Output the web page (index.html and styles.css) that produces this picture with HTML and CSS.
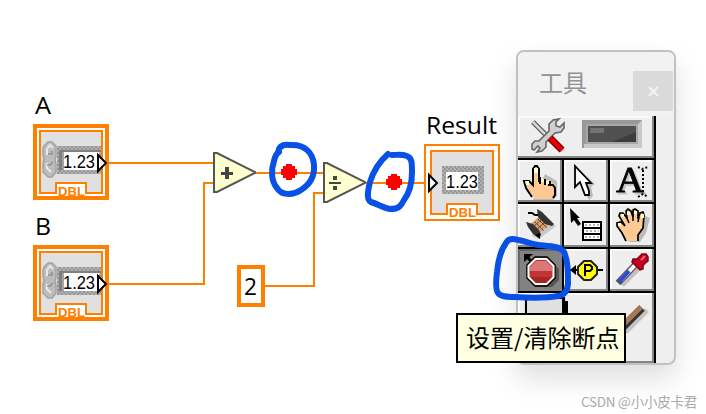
FILE: index.html
```html
<!DOCTYPE html>
<html lang="zh-CN">
<head>
<meta charset="utf-8">
<title>工具</title>
<link rel="stylesheet" href="styles.css">
</head>
<body>
<main class="canvas">
<svg class="diagram" width="706" height="414" viewBox="0 0 706 414">
  <defs>
    <pattern id="dither" width="4" height="4" patternUnits="userSpaceOnUse"><path fill="#b0b0b0" d="M0 0h4v4H0z"/><path fill="#979797" d="M0 0h2v2H0zM2 2h2v2H2z"/></pattern>
    <g id="control">
      <path fill="#fff" stroke="#ff8000" stroke-width="4" d="M2 2h72v72H2z"/>
      <path fill="#e0e0e0" stroke="#ff8000" stroke-width="2" d="M7 7h62v62H7z"/>
      <path fill="url(#dither)" d="M24 22h44v28H24z"/>
      <path fill="#808080" d="M26 26h3v20h-3zM29 26h39v2H29z"/>
      <path fill="#fff" d="M31 28h35v18H31z"/>
      <path fill="#bcbcbc" stroke="#a2a2a2" stroke-width="1.5" d="M11 22l4-4h4l4 4v10l-1 4 1 4v8l-4 5h-4l-5-5v-9l1-4-1-4v-6z"/>
      <path fill="none" stroke="#e8e8e8" stroke-width="2" d="M14 31v-6l3-4 3 3M14 39v5l4 4"/>
      <path fill="none" stroke="#909090" stroke-width="1.5" d="M15 30h4v-3M14 41h3l3-3"/>
      <text class="digits" x="30" y="44" textLength="32" lengthAdjust="spacingAndGlyphs">1.23</text>
      <path fill="#fff" stroke="#000" stroke-width="2" d="M65 31v16l8-8z"/>
      <path fill="#fff" stroke="#ff8000" stroke-width="2" d="M23 70V59h30v11"/>
      <path fill="#fff" d="M24 67h28v5H24z"/>
      <text class="dbl" x="25" y="71.5" textLength="27" lengthAdjust="spacingAndGlyphs">DBL</text>
    </g>
    <g id="gate">
      <path fill="#ffffd0" stroke="#555" stroke-width="2" d="M1 1h3l38 19v1L4 40H1z"/>
    </g>
    <path id="dot" fill="#f00" d="M-3-8h6v2h3v3h2v6H6v3H3v2h-6V6h-3V3h-2v-6h2v-3h3z"/>
  </defs>
  <path class="wire" d="M109 163h106M109 284h95V183h11M255 173h69M265 286h49v-93h11M366 183h63"/>
  <text class="label" x="35" y="114" textLength="16" lengthAdjust="spacingAndGlyphs">A</text>
  <text class="label" x="35" y="235" textLength="16" lengthAdjust="spacingAndGlyphs">B</text>
  <text class="label" x="426" y="134" textLength="71" lengthAdjust="spacingAndGlyphs">Result</text>
  <use href="#control" x="33" y="124"/>
  <use href="#control" x="33" y="245"/>
  <g transform="translate(424 144)">
    <path fill="#fff" stroke="#ff8000" stroke-width="2" d="M1 1h74v75H1z"/>
    <path fill="#e0e0e0" stroke="#ff8000" stroke-width="2" d="M7 7h62v63H7z"/>
    <path fill="url(#dither)" d="M18 22h42v28H18z"/>
    <path fill="#fff" d="M22 28h32v18H22z"/>
    <text class="digits" x="22" y="44" textLength="32" lengthAdjust="spacingAndGlyphs">1.23</text>
    <path fill="#fff" stroke="#000" stroke-width="2" d="M5 31v16l8-8z"/>
    <path fill="#fff" stroke="#ff8000" stroke-width="2" d="M23 71V60h30v11"/>
    <path fill="#fff" d="M24 68h28v5H24z"/>
    <text class="dbl" x="25" y="72.5" textLength="27" lengthAdjust="spacingAndGlyphs">DBL</text>
  </g>
  <use href="#gate" x="213" y="152"/>
  <path fill="#444" d="M221 172h12v3h-12zM225 167h4v12h-4z"/>
  <use href="#gate" x="323" y="162"/>
  <path fill="#444" d="M329 182h12v2h-12zM333 176h4v4h-4zM333 186h4v4h-4z"/>
  <path fill="#fff" stroke="#ff8000" stroke-width="4" d="M239 267h24v38h-24z"/>
  <text class="label" x="244" y="295" textLength="13" lengthAdjust="spacingAndGlyphs">2</text>
  <use href="#dot" x="289" y="172"/>
  <use href="#dot" x="394" y="182"/>
</svg>

<section class="palette">
  <header class="titlebar">
    <h1 class="title">工具</h1>
    <svg class="close" width="40" height="40" viewBox="633 71 40 40"><path fill="none" stroke="#f4f4f4" stroke-width="2" d="M649 87l9 9M658 87l-9 9"/></svg>
  </header>
  <div class="tools">
    <svg class="cell wide" viewBox="518 116 136 42">
      <path fill="none" stroke="#ccc" stroke-width="5" d="M541 130l22 21"/>
      <path fill="none" stroke="#555" stroke-width="5" d="M533 122l16 16"/><path fill="none" stroke="#d8d8d8" stroke-width="2.5" d="M533 122l17 17"/>
      <path fill="#d0d0d0" stroke="#666" stroke-width="1.6" d="M553 120l-4 4v7l-10 10h-4l-3 3v5l2 1 4-4 2 2-3 4 5-1 4-4v-5l9-9 6-1 3-4v-5l-4 4-4-1v-4l3-3z"/>
      <path fill="none" stroke="#700" stroke-width="7" d="M550 138l12 12"/><path fill="none" stroke="#e00" stroke-width="4" d="M550 138l12 12"/>
      <path fill="#989898" d="M582 120h60v28h-60z"/><path fill="#c8c8c8" d="M584 144h54v-20l4-4v28h-58z"/><path fill="#a8a8a8" d="M586 124h52v20h-52z"/>
      <path fill="#505050" d="M588 126h48v16h-48z"/><path fill="#747474" d="M590 128h14v5h-14z"/><path fill="#3d3d3d" d="M612 142l24-10v10z"/>
    </svg>
    <svg class="cell" viewBox="518 160 44 42">
      <path fill="#bbb" d="M545 174l12 7v15l-4 4h-20z"/>
      <path fill="#ffc994" d="M534 167h4v14l3-2h4l2 1h3l2 3 3 1v8l-2 7h-18l-6-8-4-7 2-2 5 3 2 2z"/>
      <path fill="none" stroke="#000" stroke-width="2" d="M532 197l-6-9-2-7h5l4 4v-16l2-3h2l2 3v12h6v2h4v2h4l2 3v7l-2 3"/>
      <path stroke="#000" stroke-width="2" d="M540 177v7M545 179v6M550 181v5"/><path fill="#ffffd0" d="M534 168h4v5h-4zM525 181h4v4h-3zM541 179h3v3h-3zM546 181h3v3h-3z"/>
    </svg>
    <svg class="cell" viewBox="564 160 44 42">
      <path fill="#bbb" d="M579 169l16 15-4 3 2 9-4 4-5-9z"/><path fill="#fff" stroke="#000" stroke-width="1.8" d="M575 166v21l5-5 5 13h4v-4l-3-8h5z"/>
    </svg>
    <svg class="cell" viewBox="610 160 44 42">
      <text class="serif-a" x="616" y="192" textLength="28" lengthAdjust="spacingAndGlyphs">A</text>
      <path fill="none" stroke="#000" stroke-width="2" stroke-dasharray="2 2" d="M638 167l4 2 6-2M643 170v24M638 197l5-3 5 3"/>
    </svg>
    <svg class="cell" viewBox="518 204 44 43">
      <path fill="#c8c8c8" d="M544 217l12 9-17 13-7-3z"/>
      <path fill="none" stroke="#000" stroke-width="2" d="M528 213h4l3 2h3"/>
      <path fill="#d79e6e" d="M541 215l9 9-13 11-9-9z"/>
      <path stroke="#3a2920" stroke-width="1" stroke-dasharray="2 1" d="M538 219l9 9M535 222l9 9M532 225l9 9M543 218l-12 11M546 221l-12 11"/>
      <path fill="#333" d="M537 209l5 3 7 7 5 5-2 2-7-2-7-7zM526 222l7 2 6 6 2 5-2 3-6-4-5-7z"/>
      <path d="M535 235l5-2v6z"/>
    </svg>
    <svg class="cell" viewBox="564 204 44 43">
      <path d="M570 208l10 10h-3l4 6-3 2-4-6-3 3z"/><path fill="#fff" stroke="#000" stroke-width="2" d="M583 222h18v18h-18zM583 228h18M583 234h18"/><path stroke="#999" stroke-width="1.5" stroke-dasharray="2 2" d="M585 225h14M586 231h13M585 237h14"/>
    </svg>
    <svg class="cell" viewBox="610 204 44 43">
      <path fill="#bbb" d="M645 216l5 2-4 15-6 9h-11z"/>
      <path fill="#ffc994" d="M626 241l-4-8-5-7v-3l4-1 4 4-6-10 1-3h3l4 5-1-7 2-2 3 2 2 6v-7l2-1 3 2v8l2-6 3-1 1 3-1 13-5 7v6z"/>
      <path fill="none" stroke="#000" stroke-width="1.7" d="M626 241l-4-8-5-7v-3l4-1 4 4-6-10 1-3h3l4 5-1-7 2-2 3 2 2 6v-7l2-1 3 2v8l2-6 3-1 1 3-1 13-5 7v6"/>
      <path stroke="#000" stroke-width="1.5" d="M626 216l3 7M633 214v7M639 217l-1 5"/><path fill="#ffffd0" d="M621 214h3v3h-3zM627 212h3v3h-3zM634 211h3v3h-3zM641 214h3v4h-3zM618 223h3v3h-3z"/>
    </svg>
    <svg class="cell pressed" viewBox="518 249 44 42">
      <path fill="#555" d="M537 261h14l8 8v11l-7 7h-14z"/><path stroke="#000" stroke-width="3" d="M526 256l6 6"/><path d="M524 254h9l-9 8z"/>
      <path fill="#c33c3c" stroke="#000" stroke-width="1.5" d="M535 257h12l8 8v13l-8 8h-12l-8-8v-13z"/><path fill="#c23434" stroke="#fff" stroke-width="2" d="M535.5 259h11l7 7v11l-7 7h-11l-7-7v-11z"/><path fill="#dc7777" d="M536 261h10l6 6v4h-22v-4z"/><path fill="#a62525" d="M530 277h22l-6 6h-10z"/>
    </svg>
    <svg class="cell" viewBox="564 249 44 42">
      <path stroke="#000" stroke-width="2" d="M570 270h33"/><path d="M570 270l6-5v10z"/><path fill="#ff0" stroke="#222" stroke-width="2" d="M584 261h7l6 6v7l-6 6h-7l-6-6v-7z"/><path fill="none" stroke="#000" stroke-width="2" d="M585 276v-11h5l2 2v2l-2 2h-5"/>
    </svg>
    <svg class="cell" viewBox="610 249 44 42">
      <path fill="none" stroke="#c0c0c0" stroke-width="5" d="M622 285l22-22"/><path fill="none" stroke="#555" stroke-width="6.5" d="M618 283l19-20"/><path fill="none" stroke="#fff" stroke-width="4" d="M621 280l17-18"/><path fill="none" stroke="#3048df" stroke-width="4" d="M619 282l10-11"/>
      <path fill="#c40020" stroke="#800018" stroke-width="1.5" d="M642 254h4l2 3v4l-5 4v4l-3 1-8-8 1-3h4z"/><path stroke="#f66" stroke-width="2" d="M641 260l4-4"/>
    </svg>
    <svg class="cell bottom" viewBox="518 293 136 70">
      <path fill="#e0e0e0" d="M524 297h42v66h-42z"/><path fill="none" stroke="#000" stroke-width="2" d="M526 363v-65h38"/><path d="M562 297h3v4h3v14h-6z"/>
      <path stroke="#c4c4c4" stroke-width="6" d="M647 310l-22 22"/><path stroke="#333" stroke-width="8" d="M642 308l-20 20"/><path stroke="#a97850" stroke-width="5" d="M641 307l-20 20"/>
    </svg>
  </div>
</section>

<svg class="marks" width="706" height="414" viewBox="0 0 706 414">
  <path d="M278 152c1-6 5-8 12-7c15-1 23 8 24 20c1 13-5 20-13 25c-9 6-20 5-24-2c-6-7-6-18-3-27c1-5 2-7 5-9"/>
  <path d="M388 154c-9 8-15 18-18 28c-3 12-3 18 1 20c7 2 12 6 19 7c9 0 11-3 14-9c6-8 8-18 8-28c0-9 0-14-5-16c-5-2-10-1-15-1"/>
  <path d="M518 240c-6-2-10-1-12 3c-5 7-8 19-9 29c-1 8-2 17 1 21c3 4 10 4 17 4c16 1 32 1 43-1c7-1 9-5 10-12c0-12 0-23-4-32c-3-6-15-6-25-7c-8-1-14-4-21-5"/>
</svg>
<div class="tooltip">设置/清除断点</div>
<p class="watermark">CSDN @小小皮卡君</p>
</main>
</body>
</html>
```
FILE: styles.css
```css
* { box-sizing: border-box; }
body { margin: 0; background: #fff; }
.canvas {
  position: relative;
  width: 706px;
  height: 414px;
  overflow: hidden;
  font-family: "Noto Sans", "Noto Sans CJK SC", sans-serif;
}
.diagram, .marks { position: absolute; top: 0; left: 0; }
.wire { fill: none; stroke: #ff8000; stroke-width: 2; }
.label { font: 24px "Open Sans", sans-serif; }
.digits { font: 19px "Liberation Sans", sans-serif; }
.dbl { font: bold 13.5px "Liberation Sans", sans-serif; fill: #ff8000; }
.serif-a {
  font: 35px "Liberation Serif", serif;
  stroke: #000;
  stroke-width: .8px;
  filter: drop-shadow(2px 2px 0 #c4c4c4);
}
.marks path {
  fill: none;
  stroke: #0850e6;
  stroke-width: 6;
  stroke-linecap: round;
  stroke-linejoin: round;
}
.palette {
  position: absolute;
  left: 516px;
  top: 50px;
  width: 160px;
  height: 315px;
  overflow: hidden;
  border: 2px solid #c1c1c1;
  border-radius: 8px;
  background: #efefef;
  box-shadow: 0 14px 28px rgba(0, 0, 0, .13);
}
.titlebar {
  display: flex;
  justify-content: space-between;
  height: 64px;
  padding: 19px 1px 0 21px;
  background: #f2f2f2;
}
.title {
  margin: -9px 0 0;
  color: #929292;
  font: 24px/40px "Noto Sans CJK SC", sans-serif;
}
.close { background: #dadada; }
.tools {
  display: grid;
  grid-template-columns: repeat(3, 44px);
  grid-template-rows: 42px 42px 43px 42px 70px;
  gap: 2px;
  width: 138px;
  padding-right: 2px;
  background: #000;
}
.cell {
  display: block;
  width: 100%;
  height: 100%;
  background: #eee;
  box-shadow: inset -2px -2px #858585, inset 2px 2px #fafafa;
}
.wide, .bottom { grid-column: span 3; }
.pressed { background: #828282; box-shadow: inset 2px 2px #666; }
.tooltip {
  position: absolute;
  left: 456px;
  top: 313px;
  width: 170px;
  height: 50px;
  padding-left: 8px;
  border: 2px solid #000;
  background: #ffffe1;
  font: 24px/44px "Noto Sans CJK SC", sans-serif;
  white-space: nowrap;
}
.watermark {
  position: absolute;
  left: 581px;
  top: 391px;
  margin: 0;
  color: #aaa;
  font: 13.5px/20px "Noto Sans CJK SC", sans-serif;
  letter-spacing: -.25px;
  white-space: nowrap;
}
```
